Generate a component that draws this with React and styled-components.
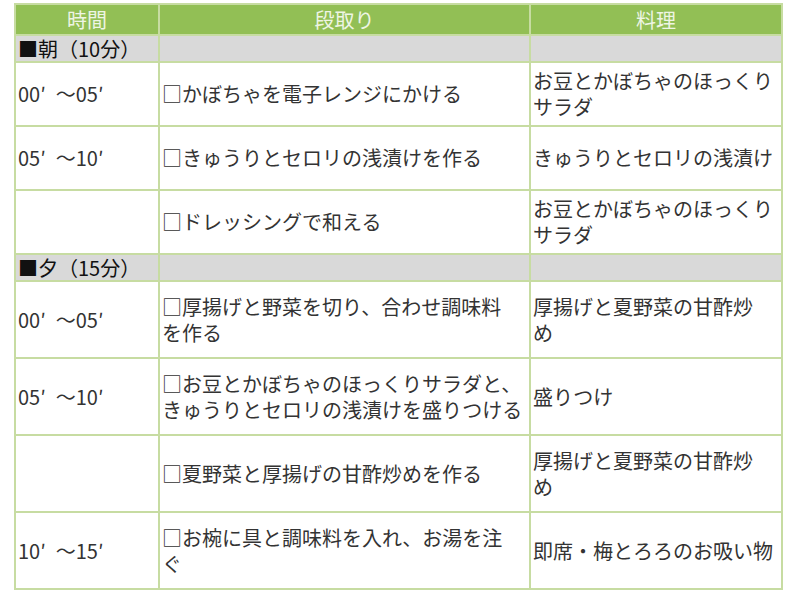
import styled, { createGlobalStyle } from "styled-components";

const GlobalStyle = createGlobalStyle`
  body {
    margin: 0;
    background: #fff;
    font-family: "Noto Sans CJK JP", "Noto Sans", sans-serif;
  }
`;

const Page = styled.div`
  padding: 3px 0 0 14px;
`;

const Table = styled.table`
  width: 767px;
  table-layout: fixed;
  border-collapse: collapse;
  font-size: 20px;
  color: #333;
`;

const HeadCell = styled.th`
  width: ${(p) => p.$w}px;
  height: 29px;
  padding: 0;
  background: #92bf55;
  border: 2px solid #c7dca2;
  color: #eef5e4;
  font-weight: 400;
  text-align: center;
  vertical-align: middle;
`;

const Row = styled.tr`
  height: ${(p) => p.$h}px;
`;

const SectionCell = styled.td`
  padding: 0 2px;
  background: #d9d9d9;
  border: 2px solid #c7dca2;
  color: #111;
  white-space: nowrap;
  line-height: 24px;
`;

const Cell = styled.td`
  padding: 0 1px 0 2px;
  border: 2px solid #c7dca2;
  vertical-align: middle;
  line-height: 26px;
  white-space: nowrap;
`;

const sections = [
  {
    title: "■朝（10分）",
    h: 27,
    rows: [
      { h: 64, time: "00′\u2002～05′", step: ["□かぼちゃを電子レンジにかける"], dish: ["お豆とかぼちゃのほっくり", "サラダ"] },
      { h: 64, time: "05′\u2002～10′", step: ["□きゅうりとセロリの浅漬けを作る"], dish: ["きゅうりとセロリの浅漬け"] },
      { h: 64, time: "", step: ["□ドレッシングで和える"], dish: ["お豆とかぼちゃのほっくり", "サラダ"] },
    ],
  },
  {
    title: "■夕（15分）",
    h: 27,
    rows: [
      { h: 77, time: "00′\u2002～05′", step: ["□厚揚げと野菜を切り、合わせ調味料", "を作る"], dish: ["厚揚げと夏野菜の甘酢炒", "め"] },
      { h: 77, time: "05′\u2002～10′", step: ["□お豆とかぼちゃのほっくりサラダと、", "きゅうりとセロリの浅漬けを盛りつける"], dish: ["盛りつけ"] },
      { h: 77, time: "", step: ["□夏野菜と厚揚げの甘酢炒めを作る"], dish: ["厚揚げと夏野菜の甘酢炒", "め"] },
      { h: 77, time: "10′\u2002～15′", step: ["□お椀に具と調味料を入れ、お湯を注", "ぐ"], dish: ["即席・梅とろろのお吸い物"] },
    ],
  },
];

function Lines({ lines }) {
  return lines.map((line, i) => (
    <span key={i}>
      {i > 0 && <br />}
      {line}
    </span>
  ));
}

export default function App() {
  return (
    <>
      <GlobalStyle />
      <Page>
        <Table>
          <thead>
            <tr>
              <HeadCell $w={142}>時間</HeadCell>
              <HeadCell $w={369}>段取り</HeadCell>
              <HeadCell $w={250}>料理</HeadCell>
            </tr>
          </thead>
          <tbody>
            {sections.map((s) => [
              <Row key={s.title} $h={s.h}>
                <SectionCell>{s.title}</SectionCell>
                <SectionCell />
                <SectionCell />
              </Row>,
              ...s.rows.map((r, i) => (
                <Row key={s.title + i} $h={r.h}>
                  <Cell>{r.time}</Cell>
                  <Cell>
                    <Lines lines={r.step} />
                  </Cell>
                  <Cell>
                    <Lines lines={r.dish} />
                  </Cell>
                </Row>
              )),
            ])}
          </tbody>
        </Table>
      </Page>
    </>
  );
}
